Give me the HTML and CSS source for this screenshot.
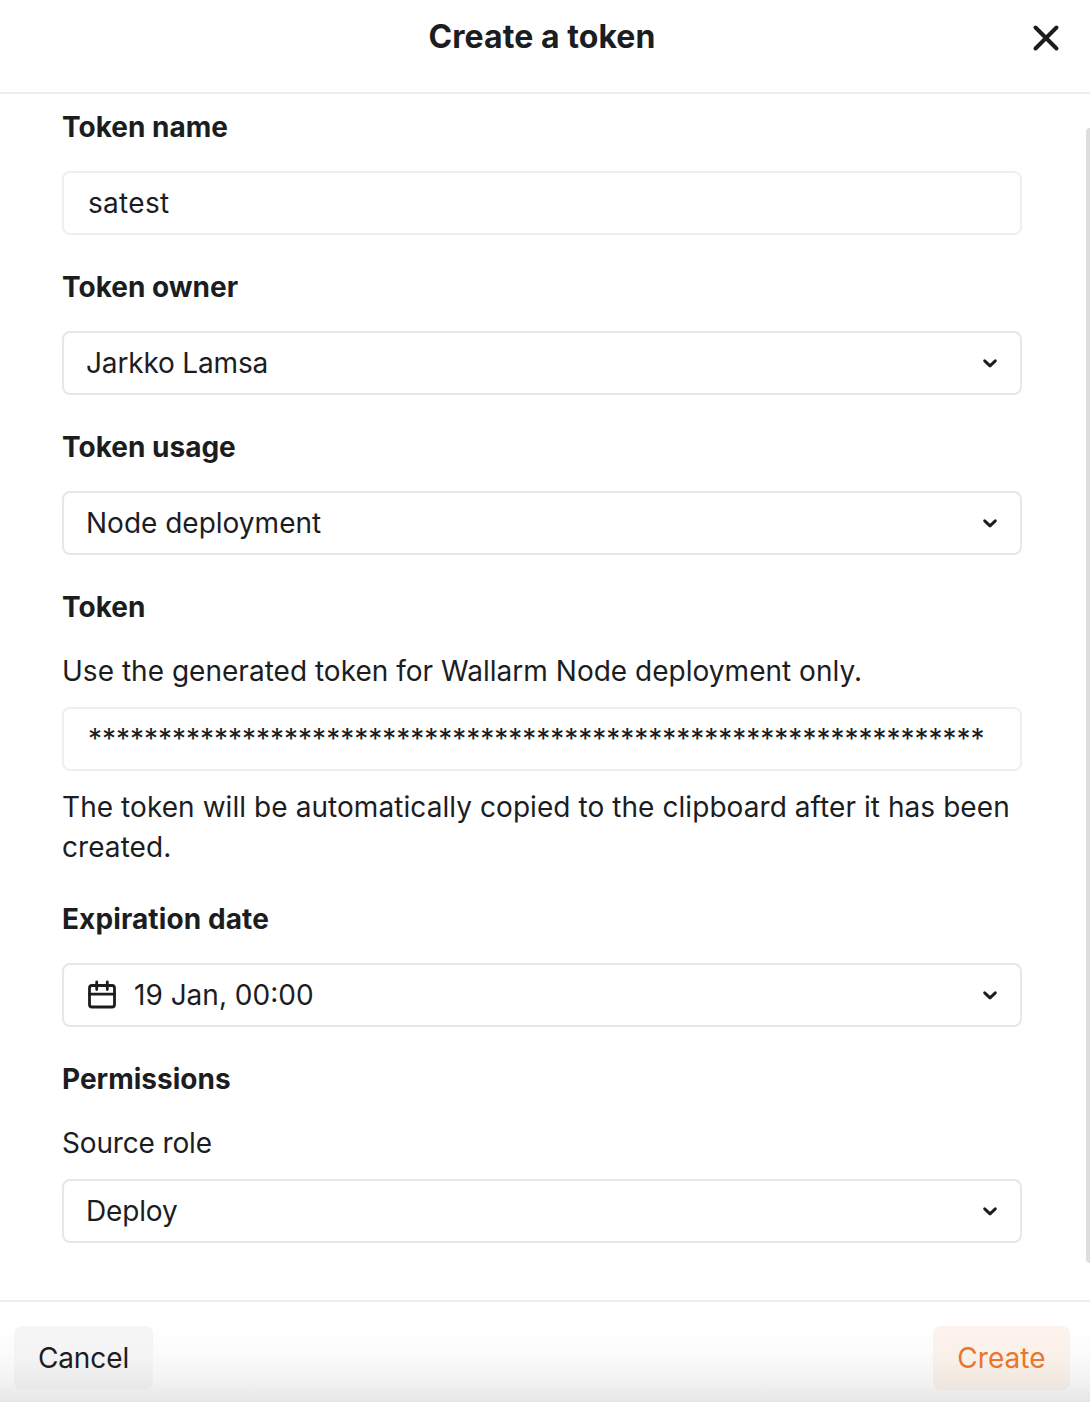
FILE: index.html
```html
<!DOCTYPE html>
<html lang="en">
<head>
<meta charset="utf-8">
<title>Create a token</title>
<link rel="stylesheet" href="styles.css">
</head>
<body>
<div class="dialog">
  <header class="header">
    <h1 class="title">Create a token</h1>
    <button class="close" aria-label="Close">
      <svg width="28" height="28" viewBox="0 0 28 28"><path d="M3.500 3.500l21 21M24.500 3.500l-21 21"/></svg>
    </button>
  </header>
  <main class="body">
    <section class="group">
      <h2 class="label">Token name</h2>
      <div class="field input"><span class="value name">satest</span></div>
    </section>
    <section class="group">
      <h2 class="label">Token owner</h2>
      <div class="field select"><span class="value tight">Jarkko Lamsa</span>
        <svg class="chevron" width="16" height="12" viewBox="0 0 16 12"><path d="M2.700 3.900L8 8.900l5.300-5"/></svg></div>
    </section>
    <section class="group">
      <h2 class="label">Token usage</h2>
      <div class="field select"><span class="value">Node deployment</span>
        <svg class="chevron" width="16" height="12" viewBox="0 0 16 12"><path d="M2.700 3.900L8 8.900l5.300-5"/></svg></div>
    </section>
    <section class="group">
      <h2 class="label">Token</h2>
      <div class="stack">
        <p class="text hint">Use the generated token for Wallarm Node deployment only.</p>
        <div class="field input"><span class="value mask">****************************************************************</span></div>
        <p class="text note">The token will be automatically copied to the clipboard after it has been created.</p>
      </div>
    </section>
    <section class="group">
      <h2 class="label expiration">Expiration date</h2>
      <div class="field select">
        <svg class="calendar" width="32" height="32" viewBox="0 0 32 32"><rect x="3.500" y="6.500" width="25" height="21.500" rx="2.500"/><path d="M3.500 15.200h25M10.700 3v7.500M21.300 3v7.500"/></svg>
        <span class="value">19 Jan, 00:00</span>
        <svg class="chevron" width="16" height="12" viewBox="0 0 16 12"><path d="M2.700 3.900L8 8.900l5.300-5"/></svg></div>
    </section>
    <section class="group">
      <h2 class="label">Permissions</h2>
      <div class="stack">
        <p class="text tight">Source role</p>
        <div class="field select"><span class="value tight">Deploy</span>
          <svg class="chevron" width="16" height="12" viewBox="0 0 16 12"><path d="M2.700 3.900L8 8.900l5.300-5"/></svg></div>
      </div>
    </section>
    <div class="scrollbar"></div>
  </main>
  <footer class="footer">
    <button class="button cancel">Cancel</button>
    <button class="button create">Create</button>
  </footer>
</div>
</body>
</html>
```
FILE: styles.css
```css
* { box-sizing: border-box; }
body {
  margin: 0;
  background: #fff;
  color: #1c1d1f;
  font: 400 28px/40px Inter, "Liberation Sans", sans-serif;
}
h1, h2, p { margin: 0; }
button { border: 0; padding: 0; background: none; font: inherit; color: inherit; }
svg { display: block; fill: none; stroke: #1c1d1f; stroke-linecap: round; stroke-linejoin: round; }

.dialog { display: flex; flex-direction: column; height: 1402px; overflow: hidden; }
.header {
  display: grid;
  grid-template-columns: 1fr auto 1fr;
  align-items: start;
  height: 94px;
  padding: 17px 30px 0 24px;
  border-bottom: 2px solid #ededf3;
}
.title { grid-column: 2; font-size: 32px; line-height: 40px; font-weight: 700; letter-spacing: 0.07px; }
.close { justify-self: end; margin-top: 7px; }
.close svg { stroke-width: 4; }

.body {
  position: relative;
  flex: 1;
  display: flex;
  flex-direction: column;
  gap: 32px;
  padding: 13px 68px 0 62px;
}
.group { display: flex; flex-direction: column; gap: 24px; }
.stack { display: flex; flex-direction: column; gap: 16px; }
.label { font-size: 28px; line-height: 40px; font-weight: 700; }
.expiration { letter-spacing: 0.1px; }
.hint { letter-spacing: 0.02px; }
.note { letter-spacing: 0.065px; }
.name { letter-spacing: 0.3px; }
.tight { letter-spacing: -0.16px; }
.mask { letter-spacing: -0.02px; }
.field {
  display: flex;
  align-items: center;
  height: 64px;
  padding: 0 22px;
  border: 2px solid #e6e6ec;
  border-radius: 8px;
}
.input { border-color: #eeeef4; padding-left: 24px; }
.value { flex: 1; white-space: nowrap; }
.chevron { stroke-width: 3; }
.calendar { margin-right: 16px; stroke-width: 2.8; }
.scrollbar {
  position: absolute;
  top: 34px;
  right: 0;
  width: 4px;
  height: 1135px;
  border-radius: 4px 0 0 4px;
  background: #dcdee6;
}

.footer {
  display: flex;
  justify-content: space-between;
  height: 102px;
  padding: 24px 20px 0 14px;
  border-top: 2px solid #ededf3;
  background: linear-gradient(#fff 25%, #fbfbfb 50%, #f3f3f3 78%, #e6e6e6);
}
.button { height: 64px; border-radius: 8px; }
.cancel { width: 139px; letter-spacing: -0.1px; background: linear-gradient(#f6f6f6, #f3f3f3 50%, #e8e8e8); }
.create { width: 137px; letter-spacing: 0.05px; background: linear-gradient(#fdf2ec, #faf0ea 50%, #eee4de); color: #e8762c; }
```
